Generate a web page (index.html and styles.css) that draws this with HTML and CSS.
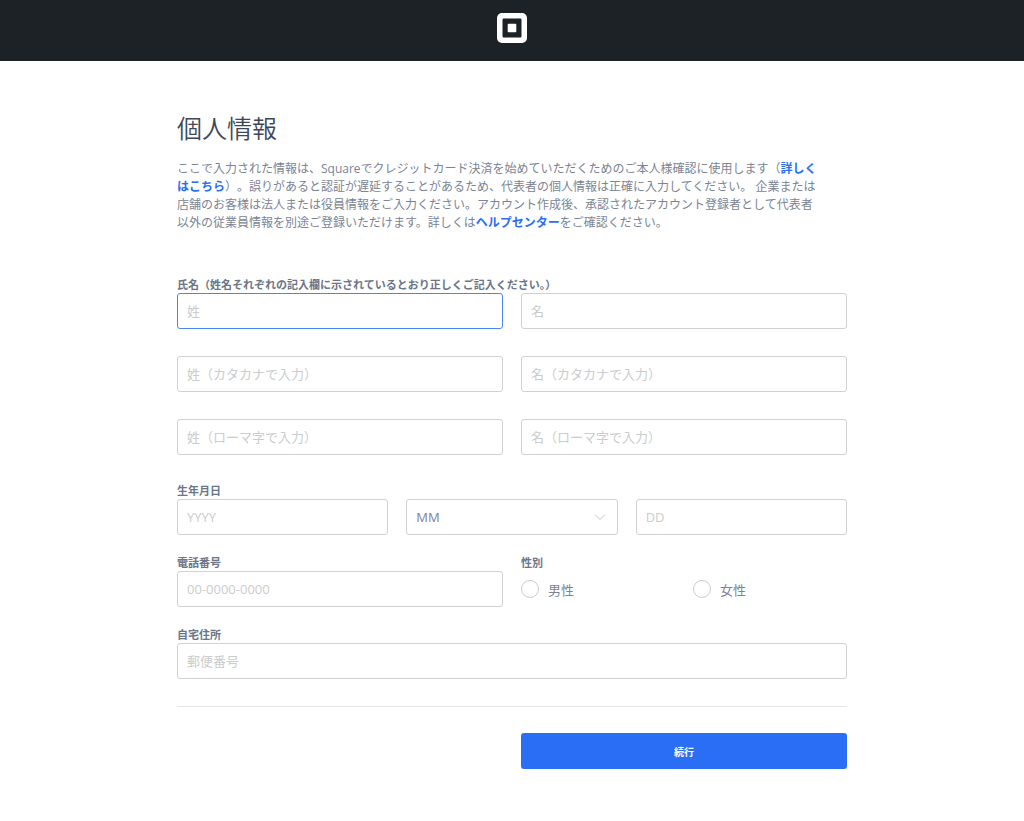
FILE: index.html
```html
<!DOCTYPE html>
<html lang="ja">
<head>
<meta charset="utf-8">
<meta name="viewport" content="width=device-width, initial-scale=1">
<title>個人情報</title>
<link rel="stylesheet" href="styles.css">
</head>
<body>
<header class="site-header">
  <svg class="logo" viewBox="0 0 30 30" role="img" aria-label="Square">
    <path fill="#fff" fill-rule="evenodd" d="M5 0h20a5 5 0 0 1 5 5v20a5 5 0 0 1-5 5H5a5 5 0 0 1-5-5V5a5 5 0 0 1 5-5zM6.500 5.500a1 1 0 0 0-1 1v17a1 1 0 0 0 1 1h17a1 1 0 0 0 1-1v-17a1 1 0 0 0-1-1z"/>
    <rect x="10.700" y="10.700" width="8.600" height="8.600" rx="1" fill="#fff"/>
  </svg>
</header>
<main class="page">
  <h1 class="title">個人情報</h1>
  <p class="intro">ここで入力された情報は、Squareでクレジットカード決済を始めていただくためのご本人様確認に使用します（<a href="#">詳しく<br>はこちら</a>）。誤りがあると認証が遅延することがあるため、代表者の個人情報は正確に入力してください。 企業または<br>店舗のお客様は法人または役員情報をご入力ください。アカウント作成後、承認されたアカウント登録者として代表者<br>以外の従業員情報を別途ご登録いただけます。詳しくは<a href="#">ヘルプセンター</a>をご確認ください。</p>
  <form class="form">
    <div class="names">
      <label class="label" for="last-name">氏名（姓名それぞれの記入欄に示されているとおり正しくご記入ください。）</label>
      <div class="name-grid">
        <input class="field field-active" id="last-name" type="text" placeholder="姓">
        <input class="field" type="text" placeholder="名" aria-label="名">
        <input class="field" type="text" placeholder="姓（カタカナで入力）" aria-label="姓（カタカナ）">
        <input class="field" type="text" placeholder="名（カタカナで入力）" aria-label="名（カタカナ）">
        <input class="field" type="text" placeholder="姓（ローマ字で入力）" aria-label="姓（ローマ字）">
        <input class="field" type="text" placeholder="名（ローマ字で入力）" aria-label="名（ローマ字）">
      </div>
    </div>
    <div class="group">
      <label class="label" for="birth-year">生年月日</label>
      <div class="thirds">
        <input class="field" id="birth-year" type="text" placeholder="YYYY">
        <div class="select-wrap">
          <select class="field" aria-label="月">
            <option>MM</option>
            <option>1</option><option>2</option><option>3</option><option>4</option>
            <option>5</option><option>6</option><option>7</option><option>8</option>
            <option>9</option><option>10</option><option>11</option><option>12</option>
          </select>
          <svg class="chevron" viewBox="0 0 12 8" aria-hidden="true"><path d="M1 1.500l5 5 5-5" fill="none" stroke="#c4c7ca"/></svg>
        </div>
        <input class="field" type="text" placeholder="DD" aria-label="日">
      </div>
    </div>
    <div class="halves">
      <div class="group">
        <label class="label" for="phone">電話番号</label>
        <input class="field" id="phone" type="tel" placeholder="00-0000-0000">
      </div>
      <div class="group" role="radiogroup" aria-labelledby="gender">
        <span class="label" id="gender">性別</span>
        <div class="options">
          <label class="option"><input class="radio" type="radio" name="gender" value="m">男性</label>
          <label class="option"><input class="radio" type="radio" name="gender" value="f">女性</label>
        </div>
      </div>
    </div>
    <div class="group">
      <label class="label" for="postal">自宅住所</label>
      <input class="field" id="postal" type="text" placeholder="郵便番号">
    </div>
    <div class="actions halves">
      <button class="submit" type="submit">続行</button>
    </div>
  </form>
</main>
</body>
</html>
```

FILE: styles.css
```css
* {
  box-sizing: border-box;
}

body {
  margin: 0;
  background: #fff;
  color: #7b8494;
  font-family: "Open Sans", "Noto Sans CJK JP", sans-serif;
  font-size: 12px;
}

.site-header {
  display: flex;
  justify-content: center;
  padding: 13px 0 18px;
  background: #1d2226;
}

.logo {
  width: 30px;
  height: 30px;
}

.page {
  max-width: 718px;
  margin: 0 auto;
  padding: 50px 24px;
}

.title {
  margin: 0 0 15px;
  color: #3d4757;
  font-size: 25px;
  font-weight: 350;
  line-height: 34px;
}

.intro {
  margin: 0 0 44px;
  line-height: 18px;
  text-spacing-trim: space-all;
}

.intro a {
  color: #2b6ef6;
  font-weight: 700;
  text-decoration: none;
}

.form {
  display: flex;
  flex-direction: column;
  gap: 19px;
}

.names {
  margin-bottom: 8px;
}

.label {
  display: block;
  padding-top: 1px;
  color: #6b7587;
  font-size: 11px;
  font-weight: 700;
  line-height: 16px;
}

.name-grid,
.halves {
  display: grid;
  grid-template-columns: 1fr 1fr;
  column-gap: 18px;
}

.name-grid {
  row-gap: 27px;
}

.thirds {
  display: grid;
  grid-template-columns: 1fr 1fr 1fr;
  column-gap: 18px;
}

.field {
  display: block;
  width: 100%;
  height: 36px;
  padding: 0 9px;
  border: 1px solid #cfd1d3;
  border-radius: 3px;
  background: #fff;
  color: #7b8494;
  font: inherit;
  font-size: 13px;
  appearance: none;
}

.field::placeholder {
  color: #cacccd;
  opacity: 1;
}

.field-active,
.field:focus {
  border-color: #4a85f8;
  outline: none;
}

.select-wrap {
  position: relative;
}

.chevron {
  position: absolute;
  top: 14px;
  right: 12px;
  width: 12px;
  height: 8px;
  pointer-events: none;
}

.options {
  display: grid;
  grid-template-columns: 1fr 1fr;
  column-gap: 18px;
  height: 36px;
}

.option {
  display: flex;
  align-items: center;
  gap: 9px;
  font-size: 13px;
}

.radio {
  width: 18px;
  height: 18px;
  margin: 0;
  border: 1px solid #c9cccf;
  border-radius: 50%;
  appearance: none;
}

.radio:checked {
  border: 5px solid #2b6ef6;
}

.actions {
  margin-top: 8px;
  padding-top: 26px;
  border-top: 1px solid #e4e6e8;
}

.submit {
  grid-column: 2;
  height: 36px;
  border: 0;
  border-radius: 3px;
  background: #2b6ef6;
  color: #fff;
  font: inherit;
  font-size: 10px;
  font-weight: 700;
}
```
